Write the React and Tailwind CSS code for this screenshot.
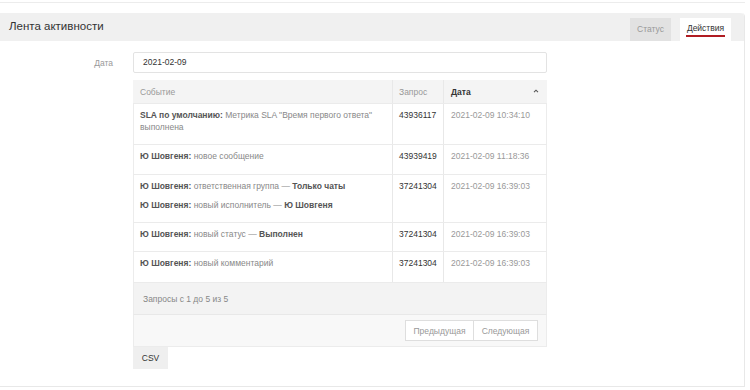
export default function App() {
  const B = ({ children }) => <b className="font-bold text-[#555]">{children}</b>;
  const rows = [
    {
      ev: [
        <span key="a">
          <B>SLA по умолчанию:</B> Метрика SLA "Время первого ответа" выполнена
        </span>,
      ],
      id: "43936117",
      date: "2021-02-09 10:34:10",
      h: "h-[41px]",
    },
    {
      ev: [
        <span key="a">
          <B>Ю Шовгеня:</B> новое сообщение
        </span>,
      ],
      id: "43939419",
      date: "2021-02-09 11:18:36",
      h: "h-[30px]",
    },
    {
      ev: [
        <span key="a">
          <B>Ю Шовгеня:</B> ответственная группа — <B>Только чаты</B>
        </span>,
        <span key="b">
          <B>Ю Шовгеня:</B> новый исполнитель — <B>Ю Шовгеня</B>
        </span>,
      ],
      id: "37241304",
      date: "2021-02-09 16:39:03",
      h: "h-[48px]",
    },
    {
      ev: [
        <span key="a">
          <B>Ю Шовгеня:</B> новый статус — <B>Выполнен</B>
        </span>,
      ],
      id: "37241304",
      date: "2021-02-09 16:39:03",
      h: "h-[29px]",
    },
    {
      ev: [
        <span key="a">
          <B>Ю Шовгеня:</B> новый комментарий
        </span>,
      ],
      id: "37241304",
      date: "2021-02-09 16:39:03",
      h: "h-[31px]",
    },
  ];
  return (
    <div className="w-[750px] h-[390px] bg-white overflow-hidden font-['Liberation_Sans',Arial,sans-serif] text-[#333]">
      <div className="h-[3px] mr-[5px] border-b border-[#ececec]"></div>
      <div className="mt-[10px] mr-[5px] h-[374px] border-r border-b border-[#e8e8e8] rounded-tr-[4px] flex flex-col">
        <div className="h-[28px] bg-[#f0f0f0] rounded-tr-[4px] flex items-end justify-between">
          <div className="self-center pl-[9px] text-[11.5px] text-[#333]">Лента активности</div>
          <div className="flex items-end pr-[13px] gap-[9px]">
            <div className="h-[23px] w-[41px] bg-[#e2e2e2] flex items-center justify-center text-[8.5px] text-[#999]">Статус</div>
            <div className="h-[23px] w-[51px] bg-white flex flex-col items-center justify-center text-[8.5px] text-[#333]">
              <span className="pb-[2px] border-b-2 border-[#b01c22] leading-[10px] px-[1px]">Действия</span>
            </div>
          </div>
        </div>
        <div className="flex pt-[11px]">
          <div className="w-[133px] pr-[20px] text-right text-[8.5px] text-[#999] pt-[5px]">Дата</div>
          <div className="w-[414px] h-[21px] border border-[#e3e3e3] rounded-[2px] flex items-center pl-[9px] text-[8.5px] text-[#333]">2021-02-09</div>
        </div>
        <div className="ml-[133px] w-[414px] mt-[7px] text-[8.5px] leading-[12px] bg-[#f5f5f5]">
          <div className="flex h-[24px] items-center bg-[#f4f4f4] border-b border-[#ebebeb]">
            <div className="w-[260px] pl-[7px] text-[#999] h-full flex items-center border-r border-[#e8e8e8]">Событие</div>
            <div className="w-[51px] pl-[6px] text-[#999] h-full flex items-center border-r border-[#e8e8e8]">Запрос</div>
            <div className="flex-1 pl-[7px] pr-[8px] font-bold text-[#333] h-full flex items-center justify-between">
              <span>Дата</span>
              <svg width="6" height="4" viewBox="0 0 6 4" className="mt-[-2px]"><path d="M1 3.2 L3 1.2 L5 3.2" stroke="#555" strokeWidth="1.1" fill="none" /></svg>
            </div>
          </div>
          {rows.map((r, i) => (
            <div key={i} className={`flex ${r.h} bg-white border-b border-[#ebebeb] border-x border-x-[#ececec]`}>
              <div className="w-[259px] pl-[6px] pr-[6px] pt-[5px] text-[#888] border-r border-[#e8e8e8] flex flex-col gap-[7px]">
                {r.ev}
              </div>
              <div className="w-[51px] pl-[6px] pt-[5px] text-[#333] border-r border-[#e8e8e8]">{r.id}</div>
              <div className="flex-1 pl-[7px] pt-[5px] text-[#999]">{r.date}</div>
            </div>
          ))}
          <div className="h-[32px] flex items-center pl-[9px] text-[#888] bg-[#f3f3f3] border-x border-[#ececec] border-b border-b-[#e8e8e8]">Запросы с 1 до 5 из 5</div>
          <div className="h-[32px] flex items-center justify-end pr-[8px] bg-[#f8f8f8] border-x border-b border-[#ececec]">
            <div className="flex h-[21px] border border-[#dedede] bg-white text-[#999]">
              <div className="w-[68px] flex items-center justify-center border-r border-[#dedede]">Предыдущая</div>
              <div className="w-[63px] flex items-center justify-center">Следующая</div>
            </div>
          </div>
        </div>
        <div className="ml-[133px] w-[35px] h-[22px] bg-[#efefef] flex items-center justify-center text-[8.5px] text-[#333]">CSV</div>
      </div>
    </div>
  );
}
